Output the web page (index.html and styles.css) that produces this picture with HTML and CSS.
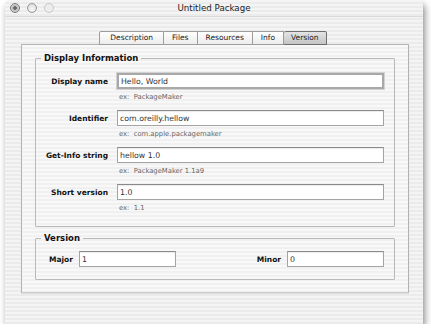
FILE: index.html
```html
<!DOCTYPE html>
<html lang="en">
<head>
    <meta charset="UTF-8">
    <title>Untitled Package</title>
    <link rel="stylesheet" href="styles.css">
</head>
<body>

<div class="window">

    <!-- Title Bar -->
    <div class="titlebar">
        <div class="lights">
            <span class="light close"></span>
            <span class="light"></span>
            <span class="light off"></span>
        </div>
        <div class="title">Untitled Package</div>
        <div></div>
    </div>

    <div class="content">

        <!-- Tabs -->
        <div class="tabs">
            <span class="tab">Description</span>
            <span class="tab">Files</span>
            <span class="tab">Resources</span>
            <span class="tab">Info</span>
            <span class="tab active">Version</span>
        </div>

        <div class="pane">

            <fieldset class="group">
                <legend>Display Information</legend>

                <div class="field">
                    <label>Display name</label>
                    <input type="text" class="focused" value="Hello, World">
                    <span class="hint">ex:&nbsp; PackageMaker</span>
                </div>

                <div class="field">
                    <label>Identifier</label>
                    <input type="text" value="com.oreilly.hellow">
                    <span class="hint">ex:&nbsp; com.apple.packagemaker</span>
                </div>

                <div class="field">
                    <label>Get-Info string</label>
                    <input type="text" value="hellow 1.0">
                    <span class="hint">ex:&nbsp; PackageMaker 1.1a9</span>
                </div>

                <div class="field">
                    <label>Short version</label>
                    <input type="text" value="1.0">
                    <span class="hint">ex:&nbsp; 1.1</span>
                </div>
            </fieldset>

            <fieldset class="group version">
                <legend>Version</legend>
                <div class="version-row">
                    <label>Major</label>
                    <input type="text" value="1">
                    <span></span>
                    <label>Minor</label>
                    <input type="text" value="0">
                </div>
            </fieldset>

        </div>
    </div>
</div>

</body>
</html>
```

FILE: styles.css
```css
/* General */
* {
    margin: 0;
    padding: 0;
    box-sizing: border-box;
}

body {
    background: #ffffff;
    font-family: "DejaVu Sans", sans-serif;
    color: #111;
}

/* Window */
.window {
    width: 418px;
    height: 324px;
    margin-left: 5px;
    border-radius: 5px 5px 0 0;
    background: repeating-linear-gradient(#f4f4f4 0 2px, #ebebeb 2px 4px);
    box-shadow: 2px 4px 7px rgba(0, 0, 0, 0.45);
    display: flex;
    flex-direction: column;
}

.titlebar {
    height: 17px;
    display: grid;
    grid-template-columns: 1fr auto 1fr;
    align-items: center;
    border-bottom: 1px solid #dadada;
}

.lights {
    display: flex;
    gap: 7px;
    padding-left: 5px;
}

.light {
    width: 10px;
    height: 10px;
    border-radius: 50%;
    border: 1px solid #9a9a9a;
    background: radial-gradient(circle at 50% 65%, #fafafa, #d2d2d2);
}

.light.close {
    background: radial-gradient(circle, #666 0 1.5px, #bbb 2px, #e2e2e2);
    border-color: #7a7a7a;
}

.light.off {
    border-color: #c8c8c8;
    background: #ededed;
}

.title {
    font-size: 8.7px;
    color: #222;
}

/* Content */
.content {
    padding: 14px 14px 0 16px;
}

.tabs {
    display: flex;
    justify-content: center;
    margin-bottom: -1px;
    padding-right: 4px;
    position: relative;
    z-index: 1;
}

.tab {
    height: 14px;
    font-size: 7.5px;
    line-height: 12px;
    padding: 0 8px;
    border: 1px solid #9c9c9c;
    border-left: none;
    background: linear-gradient(#ffffff, #ececec);
    color: #222;
}

.tab:first-child {
    border-left: 1px solid #9c9c9c;
    border-radius: 2px 0 0 0;
    padding: 0 10px;
}

.tab.active {
    background: linear-gradient(#e4e4e4, #c4c4c4);
    border-color: #6e6e6e;
    border-radius: 2px 2px 0 0;
    padding: 0 7px;
}

.pane {
    height: 249px;
    border: 1px solid #b4b4b4;
    border-bottom-color: #c9c9c9;
    background: repeating-linear-gradient(#f8f8f8 0 2px, #f0f0f0 2px 4px);
    box-shadow: 0 1px 1px rgba(0, 0, 0, 0.08);
    padding: 8px 13px 0 13px;
}

/* Group boxes */
.group {
    border: 1px solid #b9b9b9;
    border-radius: 1px;
    padding: 9px 10px 5px 0;
}

.group legend {
    font-size: 8.5px;
    font-weight: bold;
    margin-left: 5px;
    padding: 0 3px;
    line-height: 11px;
}

.field {
    display: grid;
    grid-template-columns: 72px 1fr;
    column-gap: 9px;
    align-items: center;
}

label {
    font-size: 7.5px;
    font-weight: bold;
    text-align: right;
}

input {
    height: 16px;
    border: 1px solid #a4a4a4;
    border-top-color: #8a8a8a;
    background: #fff;
    font-family: "DejaVu Sans", sans-serif;
    font-size: 7.8px;
    padding: 0 2px;
    color: #333;
    box-shadow: inset 0 1px 1px rgba(0, 0, 0, 0.08);
}

input.focused {
    border: 2px solid #a8a8a8;
    box-shadow: 0 0 0 1px #d2d2d2;
}

.hint {
    grid-column: 2;
    font-size: 6.8px;
    color: #666;
    line-height: 13px;
    padding: 2px 0 6px 2px;
}

/* Version group */
.group.version {
    margin-top: 6px;
    padding: 7px 10px 12px 0;
}

.version-row {
    display: grid;
    grid-template-columns: auto 97px 1fr auto 97px;
    column-gap: 6px;
    align-items: center;
    padding-left: 13px;
}
```
